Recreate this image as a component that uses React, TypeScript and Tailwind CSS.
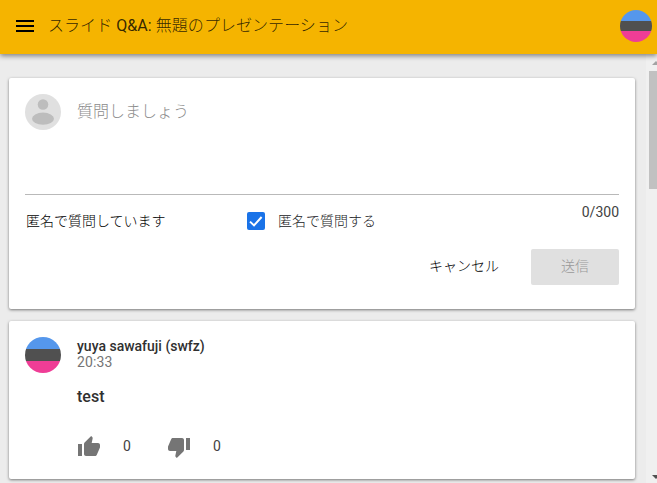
import React from "react";

const FONT = "font-['Roboto','Noto_Sans_CJK_JP',sans-serif]";

function Avatar({ className }: { className: string }) {
  return (
    <div className={`flex shrink-0 flex-col overflow-hidden rounded-full ${className}`}>
      <div className="flex-1 bg-[#5597ec]" />
      <div className="flex-1 bg-[#505050]" />
      <div className="flex-1 bg-[#ef3d96]" />
    </div>
  );
}

function AnonymousAvatar() {
  return (
    <svg className="size-9 shrink-0" viewBox="0 0 36 36">
      <circle cx="18" cy="18" r="18" fill="#e0e0e0" />
      <circle cx="18" cy="10.5" r="5.3" fill="#bdbdbd" />
      <ellipse cx="18" cy="24.7" rx="11" ry="6.1" fill="#bdbdbd" />
    </svg>
  );
}

function Header() {
  return (
    <header className="relative z-10 flex h-[54px] shrink-0 items-center bg-[#f5b400] pr-[5px] pl-4 shadow-[0_2px_5px_rgba(0,0,0,0.45)]">
      <svg className="h-3 w-[18px] -translate-y-px" viewBox="0 0 18 12">
        <path d="M0 0h18v2H0zM0 5h18v2H0zM0 10h18v2H0z" fill="#000" />
      </svg>
      <h1 className="ml-[14px] flex-1 -translate-y-px text-base leading-6 font-normal tracking-[0.05px] whitespace-nowrap text-black/80">
        <span className="font-light">スライド</span> Q&amp;A:{" "}
        <span className="font-light">無題のプレゼンテーション</span>
      </h1>
      <Avatar className="size-8 -translate-y-px" />
    </header>
  );
}

function AskCard() {
  return (
    <section className="h-[231px] shrink-0 rounded-xs bg-white px-4 pt-4 shadow-[0_1px_3px_rgba(0,0,0,0.5)]">
      <div className="flex h-[101px] border-b border-[#b9b9b9]">
        <AnonymousAvatar />
        <div className="ml-4 pt-1.5 text-base leading-6 font-light text-[#8c8c8c]">質問しましょう</div>
      </div>
      <div className="flex h-[54px] items-start text-sm leading-5">
        <span className="ml-px w-[221px] pt-4 font-light text-black">匿名で質問しています</span>
        <span className="mt-[17px] size-[18px] rounded-xs bg-[#1a73e8]">
          <svg viewBox="0 0 18 18">
            <path d="M3 9.6 7 13.4 14.6 5" fill="none" stroke="#fff" strokeWidth="2" />
          </svg>
        </span>
        <span className="ml-[13px] flex-1 pt-4 font-light text-[#202124]">匿名で質問する</span>
        <span className="pt-[7px] text-[#424242]">0/300</span>
      </div>
      <div className="flex h-9 items-center justify-end text-sm leading-5">
        <button className="mr-8 -translate-y-px font-light text-black">キャンセル</button>
        <button className="h-9 w-[88px] rounded-xs bg-[#e0e0e0] pb-0.5 font-light text-[#999]">送信</button>
      </div>
    </section>
  );
}

function QuestionCard() {
  return (
    <section className="flex h-[158px] shrink-0 rounded-xs bg-white px-4 pt-4 shadow-[0_1px_3px_rgba(0,0,0,0.5)]">
      <Avatar className="size-9" />
      <div className="ml-4">
        <div className="pt-px text-sm leading-4 font-medium text-[#303030]">yuya sawafuji (swfz)</div>
        <div className="text-sm leading-4 tracking-[0.15px] text-[#757575]">20:33</div>
        <div className="mt-[15px] text-base leading-6 font-medium text-[#303030]">test</div>
        <div className="mt-[26px] flex h-6 items-center text-sm text-[#424242]">
          <svg className="size-6" viewBox="0 0 24 24" fill="#757575">
            <path d="M1 21h4V9H1v12zm22-11c0-1.1-.9-2-2-2h-6.31l.95-4.57.03-.32c0-.41-.17-.79-.44-1.06L14.17 1 7.59 7.59C7.22 7.95 7 8.45 7 9v10c0 1.1.9 2 2 2h9c.83 0 1.54-.5 1.84-1.22l3.02-7.05c.09-.23.14-.47.14-.73v-2z" />
          </svg>
          <span className="ml-[22px] -translate-y-px">0</span>
          <svg className="ml-9 size-6" viewBox="0 0 24 24" fill="#757575">
            <path d="M15 3H6c-.83 0-1.54.5-1.84 1.22l-3.02 7.05c-.09.23-.14.47-.14.73v2c0 1.1.9 2 2 2h6.31l-.95 4.57-.03.32c0 .41.17.79.44 1.06L9.83 23l6.59-6.59c.36-.36.58-.86.58-1.41V5c0-1.1-.9-2-2-2zm4 0v12h4V3h-4z" />
          </svg>
          <span className="ml-[22px] -translate-y-px">0</span>
        </div>
      </div>
    </section>
  );
}

function Scrollbar() {
  return (
    <div className="flex w-[11px] shrink-0 flex-col overflow-hidden bg-[#f0f0f0] pl-[3px]">
      <svg className="h-[17px] w-4 shrink-0" viewBox="0 0 16 17">
        <path d="M3 11 7 7 11 11z" fill="#a3a3a3" />
      </svg>
      <div className="h-[118px] w-4 shrink-0 bg-[#c1c1c1]" />
      <div className="flex-1" />
      <svg className="h-[17px] w-4 shrink-0" viewBox="0 0 16 17">
        <path d="M3 9H11L7 13z" fill="#505050" />
      </svg>
    </div>
  );
}

export default function App() {
  return (
    <div className={`flex h-[483px] w-[657px] flex-col overflow-hidden bg-[#ececec] ${FONT}`}>
      <Header />
      <div className="flex min-h-0 flex-1">
        <main className="flex min-w-0 flex-1 flex-col gap-3 pt-6 pr-[11px] pl-[9px]">
          <AskCard />
          <QuestionCard />
        </main>
        <Scrollbar />
      </div>
    </div>
  );
}
